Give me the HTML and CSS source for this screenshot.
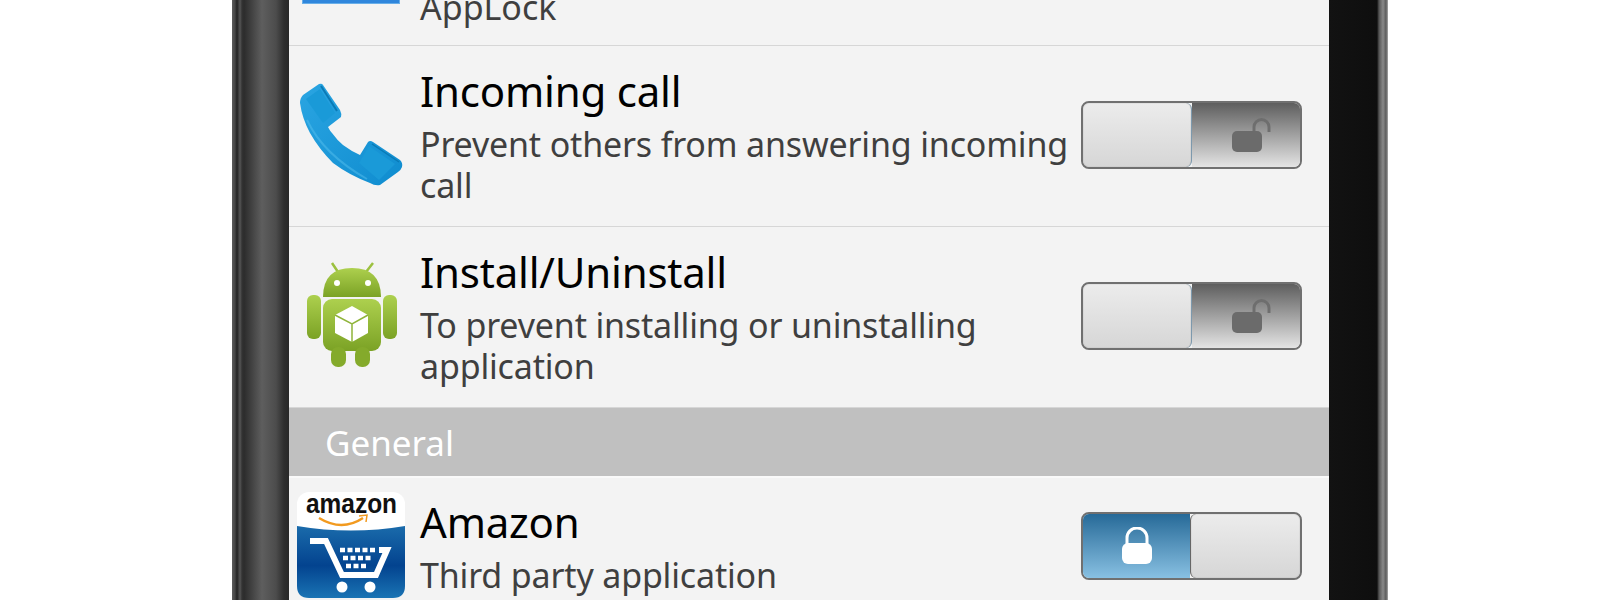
FILE: index.html
```html
<!DOCTYPE html>
<html lang="en">
<head>
  <meta charset="UTF-8" />
  <title>AppLock settings</title>
  <link rel="stylesheet" href="styles.css">
</head>
<body>
<div class="phone">
  <div class="bezel-left"></div>
  <div class="screen">

    <div class="row row-cut">
      <div class="icon"><div class="applock-icon"></div></div>
      <div class="info"><div class="sub">AppLock</div></div>
    </div>

    <div class="row">
      <div class="icon">
        <svg class="glyph" width="108" height="108" viewBox="0 0 108 108">
          <defs>
            <linearGradient id="phoneBlue" x1="0" y1="0" x2="1" y2="1">
              <stop offset="0" stop-color="#2aa5e2"/>
              <stop offset="1" stop-color="#0f8ccf"/>
            </linearGradient>
          </defs>
          <path d="M3 21 Q3 16 6 13 L22 2 Q25 1 26 3 L43 28 Q45 32 44 35 L31 45 Q33 49 35 51 Q40 58 46 63 Q54 69 63 73 L71 60 Q73 58 76 60 L103 78 Q106 81 105 85 Q104 88 101 90 L83 103 Q78 104 73 101 Q52 93 36 81 Q22 67 13 51 Q5 36 3 21 Z" fill="url(#phoneBlue)"/>
          <path d="M9 17 L23 7 L38 31 L26 41 Z" fill="#1a9ad8"/>
          <path d="M24 4 L40 29" stroke="#0a7ab6" stroke-width="2" fill="none"/>
          <path d="M72 64 L98 82 L82 98 L62 81 Z" fill="#1a9ad8"/>
          <path d="M75 62 L102 80" stroke="#0a7ab6" stroke-width="1.5" fill="none"/>
          <path d="M10 38 Q26 72 70 97" stroke="#5cc4f0" stroke-width="2" fill="none" opacity="0.45"/>
        </svg>
      </div>
      <div class="info">
        <div class="title">Incoming call</div>
        <div class="sub">Prevent others from answering incoming call</div>
      </div>
      <div class="toggle">
        <div class="thumb"></div>
        <div class="track">
          <svg class="lock" width="42" height="36" viewBox="0 0 42 36">
            <path d="M24 14 V10 A7.5 7.5 0 0 1 39 10 V15" fill="none" stroke="#6e6e6e" stroke-width="3"/>
            <rect x="2" y="14" width="30" height="21" rx="5" fill="#6b6b6b"/>
          </svg>
        </div>
      </div>
    </div>

    <div class="row">
      <div class="icon">
        <svg class="glyph" width="108" height="108" viewBox="0 0 108 108">
          <defs>
            <linearGradient id="droid" x1="0" y1="0" x2="0" y2="1">
              <stop offset="0" stop-color="#add04e"/>
              <stop offset="1" stop-color="#7ba225"/>
            </linearGradient>
          </defs>
          <path d="M35 0 L41 9 M76 0 L69 9" stroke="#9cc13f" stroke-width="2.5"/>
          <path d="M26 34 Q26 5 55 5 Q84 5 84 34 Z" fill="url(#droid)"/>
          <circle cx="40" cy="20" r="3" fill="#fff"/>
          <circle cx="71" cy="20" r="3" fill="#fff"/>
          <rect x="26" y="36" width="58" height="52" rx="9" fill="url(#droid)"/>
          <rect x="10" y="32" width="14" height="44" rx="6" fill="url(#droid)"/>
          <rect x="86" y="32" width="14" height="44" rx="6" fill="url(#droid)"/>
          <rect x="34" y="84" width="15" height="20" rx="7" fill="#84aa2b"/>
          <rect x="58" y="84" width="15" height="20" rx="7" fill="#84aa2b"/>
          <path d="M38 52 L55 43 L71 52 V70 L55 79 L38 70 Z" fill="#fff"/>
          <path d="M38 52 L55 61 L71 52 M55 61 V79" stroke="#8fb43a" stroke-width="1.5" fill="none"/>
        </svg>
      </div>
      <div class="info">
        <div class="title">Install/Uninstall</div>
        <div class="sub">To prevent installing or uninstalling application</div>
      </div>
      <div class="toggle">
        <div class="thumb"></div>
        <div class="track">
          <svg class="lock" width="42" height="36" viewBox="0 0 42 36">
            <path d="M24 14 V10 A7.5 7.5 0 0 1 39 10 V15" fill="none" stroke="#6e6e6e" stroke-width="3"/>
            <rect x="2" y="14" width="30" height="21" rx="5" fill="#6b6b6b"/>
          </svg>
        </div>
      </div>
    </div>

    <div class="section">General</div>

    <div class="row row-top">
      <div class="icon">
        <svg class="glyph" width="108" height="106" viewBox="0 0 108 106">
          <defs>
            <linearGradient id="amzBlue" x1="0" y1="0" x2="0" y2="1">
              <stop offset="0" stop-color="#1a6bab"/>
              <stop offset="0.55" stop-color="#03438f"/>
              <stop offset="1" stop-color="#1a74b4"/>
            </linearGradient>
          </defs>
          <rect width="108" height="106" rx="12" fill="#fff"/>
          <path d="M0 34 Q54 43 108 34 V94 Q108 106 96 106 H12 Q0 106 0 94 Z" fill="url(#amzBlue)"/>
          <text class="amazon-word" x="9" y="21" textLength="91" lengthAdjust="spacingAndGlyphs">amazon</text>
          <path d="M22 26 Q45 40 66 26" stroke="#f29a1f" stroke-width="2.5" fill="none"/>
          <path d="M62 24 L70 23 L69 30" stroke="#f29a1f" stroke-width="1.5" fill="none"/>
          <path d="M13 49 H29 L45 83 H79 L90 58 H82" stroke="#fff" stroke-width="6" fill="none"/>
          <path d="M43 58 h36 M46 66 h29 M49 74 h22" stroke="#fff" stroke-width="4.5" stroke-dasharray="5 2.5" fill="none"/>
          <circle cx="45" cy="95" r="5.5" fill="#fff"/>
          <circle cx="73" cy="95" r="5.5" fill="#fff"/>
        </svg>
      </div>
      <div class="info">
        <div class="title">Amazon</div>
        <div class="sub">Third party application</div>
      </div>
      <div class="toggle toggle-on">
        <div class="track-on">
          <svg width="34" height="38" viewBox="0 0 34 38">
            <path d="M7 18 V11 A10 10 0 0 1 27 11 V18" fill="none" stroke="#fff" stroke-width="3"/>
            <rect x="2" y="16" width="30" height="21" rx="6" fill="#fff"/>
          </svg>
        </div>
        <div class="thumb thumb-on"></div>
      </div>
    </div>

  </div>
  <div class="bezel-right"></div>
</div>
</body>
</html>
```

FILE: styles.css
```css
html, body {
  margin: 0;
  height: 600px;
  overflow: hidden;
  background: #fff;
}

.phone {
  display: flex;
  height: 600px;
  padding-left: 232px;
}

.bezel-left {
  width: 57px;
  background: linear-gradient(90deg, #5c5c5c 0, #444 3px, #222 5px, #555 8px, #333 10px, #2c2c2c 12px, #484848 22px, #5e5e5e 30px, #4c4c4c 44px, #2e2e2e 52px, #282828 57px);
}

.bezel-right {
  width: 59px;
  background: linear-gradient(90deg, #121212 0, #0e0e0e 48px, #555 50px, #8a8a8a 54px, #5c5c5c 57px, #aaa 59px);
}

.screen {
  width: 1040px;
  background: #f3f3f3;
  display: flex;
  flex-direction: column;
  font-family: "Noto Sans", "Open Sans", sans-serif;
}

.row {
  display: flex;
  align-items: center;
  height: 180px;
  flex-shrink: 0;
  border-bottom: 1px solid #d6d6d6;
}

.row-cut {
  height: 45px;
  align-items: flex-start;
  overflow: hidden;
}

.row-cut .icon {
  align-self: flex-start;
}

.row-cut .info {
  padding-bottom: 0;
}

.row-cut .sub {
  margin-top: -13px;
  letter-spacing: 0;
}

.row-top {
  align-items: flex-start;
  padding-top: 17px;
  border-bottom: none;
}

.row-top .icon {
  margin-top: -3px;
}

.icon {
  width: 108px;
  margin-left: 8px;
  margin-right: 15px;
  display: flex;
  justify-content: center;
  flex-shrink: 0;
}

.glyph {
  overflow: visible;
}

.applock-icon {
  width: 96px;
  height: 3px;
  background: #2f86dc;
  border: 1px solid #68aee8;
  border-top: none;
}

.info {
  width: 661px;
  flex-shrink: 0;
  padding-bottom: 2px;
}

.title {
  font-size: 42px;
  line-height: 54px;
  letter-spacing: -0.2px;
  margin-bottom: 6px;
  color: #000;
}

.sub {
  font-size: 34px;
  line-height: 41px;
  letter-spacing: -0.17px;
  color: #3f3f3f;
}

.section {
  height: 70px;
  flex-shrink: 0;
  background: #c0c0c0;
  border-bottom: 2px solid #f9f9f9;
  box-sizing: border-box;
  padding-left: 36px;
  color: #fff;
  font-size: 35px;
  line-height: 70px;
}

.toggle {
  width: 221px;
  height: 68px;
  box-sizing: border-box;
  display: flex;
  flex-shrink: 0;
  margin-top: -2px;
  border: 2px solid #707070;
  border-radius: 8px;
  overflow: hidden;
}

.toggle-on {
  margin-top: 17px;
}

.thumb {
  width: 108px;
  background: linear-gradient(180deg, #ececec, #d6d6d6);
  border-right: 1px solid #7d99ad;
  border-radius: 6px;
  box-shadow: inset 0 0 1px #888;
  flex-shrink: 0;
}

.thumb-on {
  width: 109px;
  border-right: none;
  border-left: 1px solid #666;
}

.track {
  flex: 1;
  display: flex;
  align-items: center;
  justify-content: center;
  background: linear-gradient(180deg, #5e5e5e, #9a9a9a 45%, #e4e4e4);
}

.lock {
  margin-left: 10px;
}

.track-on {
  flex: 1;
  display: flex;
  align-items: center;
  justify-content: center;
  background: linear-gradient(180deg, #276a98, #88c0e2);
}

.amazon-word {
  font-family: "Liberation Sans", sans-serif;
  font-weight: bold;
  font-size: 27px;
  fill: #111;
}
```
